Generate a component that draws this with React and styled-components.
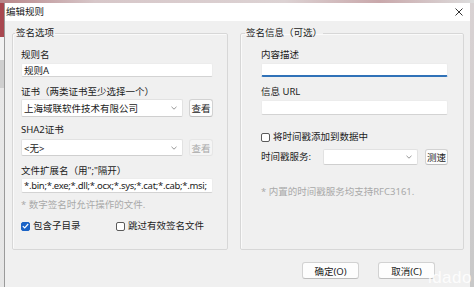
import React from "react";
import styled, { createGlobalStyle } from "styled-components";

const Global = createGlobalStyle`
  html, body { margin: 0; padding: 0; }
  body { width: 474px; height: 287px; overflow: hidden; background: #d8d0d0; }
  * { box-sizing: border-box; }
`;

const FONT = `"Segoe UI", "Noto Sans", "Noto Sans CJK SC", sans-serif`;

const Screen = styled.div`
  position: relative;
  width: 474px;
  height: 287px;
  display: flex;
  flex-direction: column;
  overflow: hidden;
  font-family: ${FONT};
  font-size: 9.5px;
  color: #1b1b1b;
  background: #d6cfd0;
`;

const TopStrip = styled.div`
  height: 3px;
  background: linear-gradient(90deg, #b8868a 0%, #d7c7c9 20%, #dcd2d3 60%, #c9a8ab 80%, #ddd 100%);
`;

const Main = styled.div`
  flex: 1;
  display: flex;
`;

const SideStrip = styled.div`
  width: 4px;
  background: ${(p) =>
    p.$right
      ? "linear-gradient(180deg, #d9d2d3 0%, #c8c8c8 100%)"
      : "linear-gradient(180deg, #a8474f 0%, #a8474f 12%, #f2f2f2 12%, #f2f2f2 20%, #cfcfcf 20%, #cfcfcf 30%, #e9e9e9 30%, #e6e6e6 100%)"};
`;

const Window = styled.div`
  flex: 1;
  display: flex;
  flex-direction: column;
  border-left: 1px solid #9a9a9a;
  background: #f0f0f0;
`;

const TitleBar = styled.div`
  height: 18px;
  display: flex;
  align-items: center;
  justify-content: space-between;
  padding: 0 7px 0 1px;
  background: #ffffff;
`;

const Title = styled.span`
  font-size: 9.5px;
  line-height: 14px;
  color: #1b1b1b;
`;

const CloseIcon = styled.svg`
  width: 8px;
  height: 8px;
  display: block;
`;

const Body = styled.div`
  flex: 1;
  padding: 5px 6px 0 7px;
  display: flex;
  flex-direction: column;
`;

const Groups = styled.div`
  display: flex;
  gap: 12px;
`;

const Group = styled.fieldset`
  margin: 0;
  width: ${(p) => p.$w}px;
  height: 224px;
  padding: 0 ${(p) => p.$pr}px 0 ${(p) => p.$pl}px;
  border: 1px solid #d7d7d7;
  border-radius: 2px;
  box-shadow: inset 1px 1px 0 #fafafa;
  min-width: 0;
  display: flex;
  flex-direction: column;
`;

const Legend = styled.legend`
  margin-left: ${(p) => p.$ml}px;
  padding: 0 1px;
  font-size: 9.5px;
  line-height: 14px;
  color: #1b1b1b;
`;

const Label = styled.div`
  margin-top: ${(p) => p.$mt || 0}px;
  width: ${(p) => (p.$w ? `${p.$w}px` : "auto")};
  line-height: 14px;
  font-size: 9.5px;
  white-space: nowrap;
  color: ${(p) => (p.$hint ? "#a9a9a9" : "#1b1b1b")};
`;

const TextBox = styled.div`
  margin-top: ${(p) => p.$mt || 0}px;
  height: ${(p) => p.$h}px;
  background: #ffffff;
  border: 1px solid #ececec;
  border-bottom: ${(p) => (p.$focus ? "2px solid #3072b8" : "1px solid #d3d3d3")};
  border-radius: 2px;
  padding-left: 2px;
  display: flex;
  align-items: center;
  font-size: 9.5px;
  white-space: nowrap;
  overflow: hidden;
  letter-spacing: ${(p) => p.$ls || 0}px;
`;

const Row = styled.div`
  margin-top: ${(p) => p.$mt || 0}px;
  display: flex;
  align-items: center;
  gap: ${(p) => p.$gap ?? 6}px;
  height: ${(p) => p.$h}px;
`;

const Select = styled.div`
  width: ${(p) => p.$w}px;
  height: 100%;
  background: #ffffff;
  border: 1px solid #e2e2e2;
  border-bottom-color: #cfcfcf;
  border-radius: 2px;
  display: flex;
  align-items: center;
  justify-content: space-between;
  padding: 0 5px 0 2px;
  font-size: 9.5px;
  white-space: nowrap;
`;

const Chevron = styled.svg`
  width: 6px;
  height: 4px;
  display: block;
`;

const Button = styled.div`
  width: ${(p) => p.$w}px;
  height: ${(p) => p.$h || 18}px;
  display: flex;
  align-items: center;
  justify-content: center;
  background: ${(p) => (p.$disabled ? "#f5f5f5" : "#fdfdfd")};
  border: 1px solid ${(p) => (p.$disabled ? "#e6e6e6" : "#d2d2d2")};
  border-bottom-color: ${(p) => (p.$disabled ? "#e3e3e3" : "#bdbdbd")};
  border-radius: 3px;
  font-size: 9.5px;
  color: ${(p) => (p.$disabled ? "#a8a8a8" : "#1b1b1b")};
  white-space: nowrap;
`;

const CheckItem = styled.div`
  width: ${(p) => (p.$w ? `${p.$w}px` : "auto")};
  display: flex;
  align-items: center;
  gap: 3px;
  font-size: 9.5px;
  line-height: 14px;
  white-space: nowrap;
`;

const Box = styled.span`
  width: 9px;
  height: 9px;
  border-radius: 2px;
  flex: none;
  display: flex;
  align-items: center;
  justify-content: center;
  background: ${(p) => (p.$checked ? "#1b63c6" : "#ffffff")};
  border: 1px solid ${(p) => (p.$checked ? "#1b63c6" : "#5a5a5a")};
`;

const Footer = styled.div`
  margin-top: 12px;
  display: flex;
  justify-content: flex-end;
  gap: 19px;
  padding-right: 29px;
`;

const Watermark = styled.div`
  position: absolute;
  right: 2px;
  bottom: 0px;
  line-height: 18px;
  font-family: "Liberation Sans", sans-serif;
  font-size: 17px;
  color: rgba(255, 255, 255, 0.85);
  letter-spacing: 0.5px;
`;

const Check = () => (
  <svg width="7" height="6" viewBox="0 0 7 6">
    <path d="M0.8 3.1 L2.7 4.9 L6.2 1" fill="none" stroke="#fff" strokeWidth="1.2" />
  </svg>
);

const Down = () => (
  <Chevron viewBox="0 0 6 4">
    <path d="M0.5 0.8 L3 3.2 L5.5 0.8" fill="none" stroke="#8a8a8a" strokeWidth="0.9" />
  </Chevron>
);

export default function App() {
  return (
    <Screen>
      <Global />
      <TopStrip />
      <Main>
        <SideStrip />
        <Window>
          <TitleBar>
            <Title>编辑规则</Title>
            <CloseIcon viewBox="0 0 8 8">
              <path d="M0.5 0.5 L7.5 7.5 M7.5 0.5 L0.5 7.5" stroke="#333" strokeWidth="1" />
            </CloseIcon>
          </TitleBar>
          <Body>
            <Groups>
              <Group $w={216} $pl={8} $pr={14}>
                <Legend $ml={-6}>签名选项</Legend>
                <Label $mt={8}>规则名</Label>
                <TextBox $mt={1} $h={14}>规则A</TextBox>
                <Label $mt={8}>证书（两类证书至少选择一个）</Label>
                <Row $h={18}>
                  <Select $w={162}>
                    <span>上海域联软件技术有限公司</span>
                    <Down />
                  </Select>
                  <Button $w={24}>查看</Button>
                </Row>
                <Label $mt={6}>SHA2证书</Label>
                <Row $mt={2} $h={17}>
                  <Select $w={162}>
                    <span>&lt;无&gt;</span>
                    <Down />
                  </Select>
                  <Button $w={24} $h={17} $disabled>查看</Button>
                </Row>
                <Label $mt={8}>文件扩展名（用";"隔开）</Label>
                <TextBox $h={15} $ls={-0.3}>*.bin;*.exe;*.dll;*.ocx;*.sys;*.cat;*.cab;*.msi;</TextBox>
                <Label $mt={5} $hint>* 数字签名时允许操作的文件.</Label>
                <Row $mt={7} $h={14} $gap={0}>
                  <CheckItem $w={95}>
                    <Box $checked><Check /></Box>
                    包含子目录
                  </CheckItem>
                  <CheckItem>
                    <Box />
                    跳过有效签名文件
                  </CheckItem>
                </Row>
              </Group>
              <Group $w={224} $pl={20} $pr={15}>
                <Legend $ml={-16}>签名信息（可选）</Legend>
                <Label $mt={8}>内容描述</Label>
                <TextBox $mt={1} $h={14} $focus />
                <Label $mt={8}>信息 URL</Label>
                <TextBox $mt={1} $h={15} />
                <Row $mt={15} $h={14} $gap={0}>
                  <CheckItem>
                    <Box />
                    将时间戳添加到数据中
                  </CheckItem>
                </Row>
                <Row $mt={5} $h={16} $gap={7}>
                  <Label $w={55}>时间戳服务:</Label>
                  <Select $w={95}>
                    <span />
                    <Down />
                  </Select>
                  <Button $w={23} $h={16}>测速</Button>
                </Row>
                <Label $mt={20} $hint>* 内置的时间戳服务均支持RFC3161.</Label>
              </Group>
            </Groups>
            <Footer>
              <Button $w={57} $h={17}>确定(O)</Button>
              <Button $w={57} $h={17}>取消(C)</Button>
            </Footer>
          </Body>
        </Window>
        <SideStrip $right />
      </Main>
      <Watermark>idado</Watermark>
    </Screen>
  );
}
